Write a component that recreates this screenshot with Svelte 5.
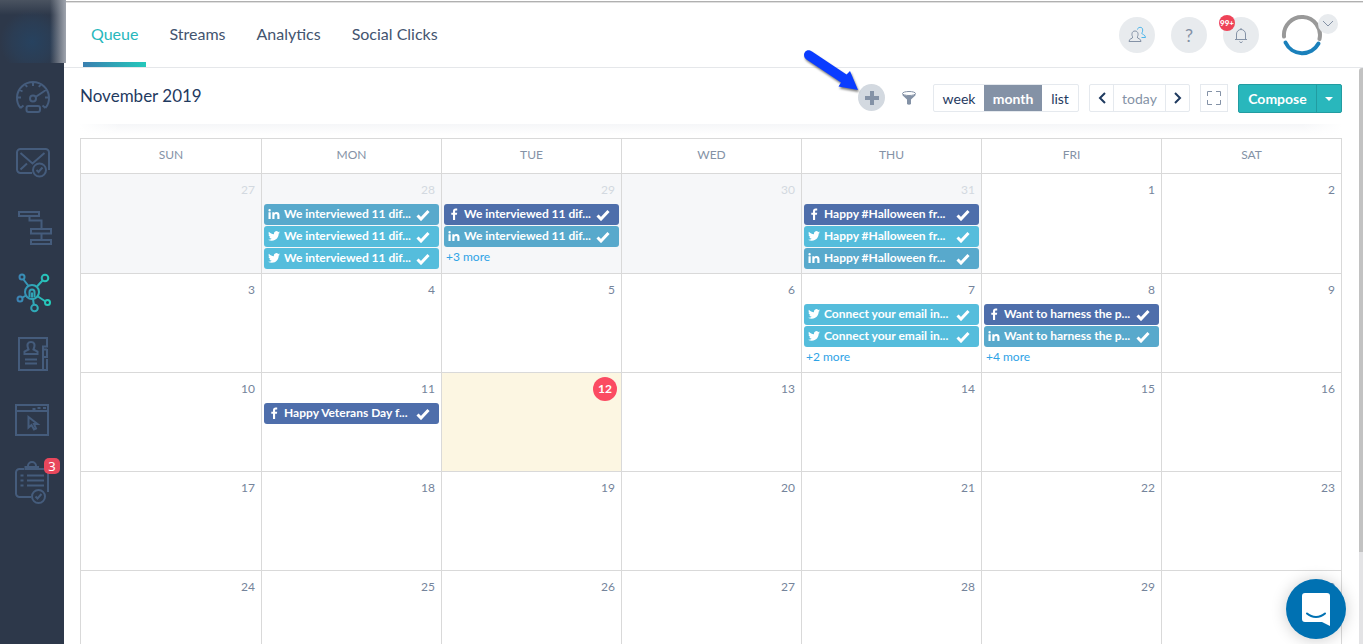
<script>
  const tabs = ['Queue', 'Streams', 'Analytics', 'Social Clicks'];
  const weekdays = ['SUN', 'MON', 'TUE', 'WED', 'THU', 'FRI', 'SAT'];
  const views = ['week', 'month', 'list'];

  let activeTab = 'Queue';
  let activeView = 'month';

  const interview = 'We interviewed 11 dif...';
  const halloween = 'Happy #Halloween fr...';
  const connect = 'Connect your email in...';
  const harness = 'Want to harness the p...';

  // posts keyed by week row and day number
  const posts = {
    '0-28': { items: [['in', interview], ['tw', interview], ['tw', interview]] },
    '0-29': { items: [['fb', interview], ['in', interview]], more: 3 },
    '0-31': { items: [['fb', halloween], ['tw', halloween], ['in', halloween]] },
    '1-7': { items: [['tw', connect], ['tw', connect]], more: 2 },
    '1-8': { items: [['fb', harness], ['in', harness]], more: 4 },
    '2-11': { items: [['fb', 'Happy Veterans Day f...']] },
  };

  const weeks = [
    [27, 28, 29, 30, 31, 1, 2],
    [3, 4, 5, 6, 7, 8, 9],
    [10, 11, 12, 13, 14, 15, 16],
    [17, 18, 19, 20, 21, 22, 23],
    [24, 25, 26, 27, 28, 29, 30],
  ].map((days, w) => days.map((n) => ({
    n,
    other: w === 0 && n > 20,
    today: n === 12,
    ...(posts[`${w}-${n}`] || { items: [] }),
  })));
</script>

<div class="shell">
  <aside class="sidebar">
    <a class="brand" href="#home" aria-label="Home"></a>
    <nav>
      <a href="#dashboard" aria-label="Dashboard">
        <svg viewBox="0 0 64 65">
          <path d="M20.500 43A16 16 0 1 1 45.500 43M20.500 43l3-2.500M45.500 43l-3-2.500M17 32.500h4M49 32.500h-4M19 24.500l3.500 2M47 24.500l-3.500 2M25 18.500l2 3.500M41 18.500l-2 3.500M33 17v4M35.500 32l9-6" />
          <circle cx="33" cy="33.500" r="3" />
          <rect x="26.500" y="41" width="13.500" height="6" rx="2" />
        </svg>
      </a>
      <a href="#email" aria-label="Email">
        <svg viewBox="0 0 64 65">
          <path d="M32 43H20.500a3.500 3.500 0 0 1-3.500-3.500V22.500a3.500 3.500 0 0 1 3.500-3.500h25a3.500 3.500 0 0 1 3.500 3.500V40M20.500 23l12 10.500 12-10.500M20.500 39.500l6.500-6" />
          <circle cx="39.500" cy="40" r="6.500" />
          <path d="M36.500 40l2 2 4-4.500" />
        </svg>
      </a>
      <a href="#automation" aria-label="Automation">
        <svg viewBox="0 0 64 65">
          <path d="M19 17h20v4H19zM31 34h20v4.500H31zM31 45h20v4H31zM29.500 22v3.500h12V33M41.500 39v5" />
        </svg>
      </a>
      <a class="active" href="#social" aria-label="Social">
        <svg viewBox="0 0 64 65">
          <defs>
            <linearGradient id="socialLine" gradientUnits="userSpaceOnUse" x1="17" y1="30" x2="51" y2="30">
              <stop offset="0" stop-color="#3d80b4" />
              <stop offset="1" stop-color="#23d0bb" />
            </linearGradient>
          </defs>
          <g stroke="url(#socialLine)">
            <circle cx="32" cy="32" r="7" />
            <circle cx="22" cy="17" r="2.500" />
            <circle cx="45" cy="18" r="3.300" />
            <circle cx="20" cy="39" r="2.500" />
            <circle cx="34.500" cy="48" r="3.300" />
            <circle cx="47.500" cy="42.500" r="2.500" />
            <path d="M23.500 19.500l5 6.500M42.500 20.500l-5.500 6M22.500 37.500l3.500-2M33 39l.800 5.500M38 36.500l7.500 5M29.500 37v-5a2.500 2.500 0 0 1 5 0v5M32 32.500v5" />
          </g>
        </svg>
      </a>
      <a href="#contacts" aria-label="Contacts">
        <svg viewBox="0 0 64 65">
          <path d="M19 13h28v8.500h-4V45H19zM47 24v8h-3M47 34v11h-3M44 24.500h3" />
          <path d="M28.500 24.500c-2.500-6 0-7.500 2.500-7.500s5 1.500 2.500 7.500l4 2v2.500H24.500v-2.500zM25 34.500h12M25 38.500h12" />
        </svg>
      </a>
      <a href="#pages" aria-label="Landing pages">
        <svg viewBox="0 0 64 65">
          <path d="M16 15h32v30H16zM16 21h32M32.500 19h3M37.500 18h3M43 18h3" />
          <path d="M28.500 27v10.500l3-2.500 2.500 4.500 2-1-2-4.500h3.500z" />
        </svg>
      </a>
      <a href="#tasks" aria-label="Tasks">
        <svg viewBox="0 0 64 65">
          <path d="M24 14h-4.500a3.500 3.500 0 0 0-3.500 3.500v21a3.500 3.500 0 0 0 3.500 3.500H31M39 14h5.500a3.500 3.500 0 0 1 3.500 3.500V37M28 11a4 4 0 1 1 8 0M20.500 20.500h3M27 20.500h17M20.500 25.500h3M27 25.500h17M20.500 30.500h3M27 30.500h17" />
          <path stroke-width="4" d="M24.500 13h14.500" />
          <circle cx="38.500" cy="41.500" r="6.500" />
          <path d="M35.500 41.500l2 2 4-4.500" />
        </svg>
        <span class="count">3</span>
      </a>
    </nav>
  </aside>

  <div class="main">
    <header class="topbar">
      <nav class="tabs">
        {#each tabs as tab}
          <a href="#{tab}" class:active={tab === activeTab} on:click={() => (activeTab = tab)}>{tab}</a>
        {/each}
      </nav>
      <div class="account">
        <button class="round" aria-label="Team">
          <svg width="18" height="18" viewBox="0 0 18 18">
            <path class="blue" d="M9.500 3.500C9.500.800 15 .300 14.700 4c0 1.800-.600 2.600-1 3.200 0 1.300 3.800 1.300 3.800 4.300h-4" />
            <path d="M1 15.500c0-3.300 3.800-2.500 3.800-4.500C3.500 9.500 3.300 5 7 5s3.500 4.500 2.200 6c0 2 3.800 1.200 3.800 4.500z" />
          </svg>
        </button>
        <button class="round help">?</button>
        <button class="round" aria-label="Notifications">
          <svg width="18" height="18" viewBox="0 0 18 18">
            <path d="M3 13.500h12M4.500 13.500V8a4.500 4.500 0 0 1 9 0v5.500M9 3.500V2M7.500 15.500a1.600 1.600 0 0 0 3 0" />
          </svg>
          <span class="unread">99+</span>
        </button>
        <button class="avatar" aria-label="Account menu">
          <svg width="42" height="42" viewBox="0 0 42 42">
            <path stroke="#999" d="M3 22.500A18 18 0 1 1 38.500 25" />
            <path stroke="#1a80bb" d="M4.500 28.500A18.500 18.500 0 0 0 37.500 29.500" />
          </svg>
          <span class="caret">
            <svg width="12" height="8" viewBox="0 0 12 8"><path d="M1 1l5 5 5-5" /></svg>
          </span>
        </button>
      </div>
    </header>

    <div class="body">
      <main>
        <div class="toolbar">
          <h1>November 2019</h1>
          <div class="actions">
            <button class="add" aria-label="Add">
              <svg width="14" height="14" viewBox="0 0 14 14"><path d="M7 0v14M0 7h14" /></svg>
              <svg class="pointer" width="64" height="52" viewBox="0 0 64 52">
                <path d="M15 8.500C8.500 4 4 12.500 9.500 16.500L44 39.500 41.500 43.500 61 47 53 28 49.500 31.500z" />
              </svg>
            </button>
            <button class="filter" aria-label="Filter">
              <svg width="16" height="16" viewBox="0 0 16 16">
                <ellipse cx="8" cy="3.500" rx="6.500" ry="2" />
                <path d="M1 4c2 2.400 12 2.400 14 0 0 1.500-3 3.500-5 5.500V14c-1 1-3 1-4 0V9.500C4 7.500 1 5.500 1 4z" />
              </svg>
            </button>
            <div class="group views">
              {#each views as view}
                <button class:active={view === activeView} on:click={() => (activeView = view)}>{view}</button>
              {/each}
            </div>
            <div class="group pager">
              <button aria-label="Previous"><svg width="8" height="12" viewBox="0 0 8 12"><path d="M7 1L2 6l5 5" /></svg></button>
              <button class="today-btn">today</button>
              <button aria-label="Next"><svg width="8" height="12" viewBox="0 0 8 12"><path d="M1 1l5 5-5 5" /></svg></button>
            </div>
            <button class="expand" aria-label="Full screen">
              <svg width="16" height="16" viewBox="0 0 16 16">
                <path d="M1.500 6V1.500H6M10 1.500h4.500V6M14.500 10v4.500H10M6 14.500H1.500V10" />
              </svg>
            </button>
            <div class="compose">
              <button>Compose</button>
              <button class="drop" aria-label="Compose options"><span></span></button>
            </div>
          </div>
        </div>
        <div class="shade"></div>

        <table>
          <thead>
            <tr>
              {#each weekdays as day}<th>{day}</th>{/each}
            </tr>
          </thead>
          <tbody>
            {#each weeks as week}
              <tr>
                {#each week as day}
                  <td class:other={day.other} class:today={day.today}>
                    <div class="date"><span>{day.n}</span></div>
                    {#each day.items as [net, text]}
                      <a class="post {net}" href="#post">
                        <svg class="net" width="12" height="12" viewBox="0 0 12 12">
                          {#if net === 'fb'}
                            <path d="M5 12V6.700H3.300V4.700H5V3.200C5 1.400 6 .500 7.600.500h1.600v1.900H8c-.700 0-.900.300-.900 1v1.300h2.100L8.900 6.700H7.100V12z" />
                          {:else if net === 'in'}
                            <path d="M.500 4.200h2.200V11H.500zM1.600 1a1.200 1.200 0 1 1 0 2.400 1.200 1.200 0 0 1 0-2.400zM4.300 4.200h2.100v.9c.400-.7 1.200-1.100 2.200-1.100 2.200 0 2.900 1.300 2.900 3.300V11H9.300V7.700c0-1-.200-1.800-1.300-1.800s-1.500.8-1.500 1.800V11H4.300z" />
                          {:else}
                            <path d="M12 2.400c-.400.200-.900.300-1.300.400.500-.300.800-.700 1-1.300-.400.300-.900.500-1.500.600A2.400 2.400 0 0 0 6 4.300C4 4.200 2.200 3.200.900 1.700.200 2.900.600 4.200 1.600 4.900c-.400 0-.800-.100-1.100-.300 0 1.200.800 2.200 2 2.400-.400.100-.700.100-1.100 0 .300 1 1.200 1.700 2.300 1.700A4.800 4.800 0 0 1 0 9.700c1.100.700 2.400 1.100 3.800 1.100 4.500 0 7-3.800 6.900-7.200.500-.300.900-.700 1.300-1.200z" />
                          {/if}
                        </svg>
                        <span>{text}</span>
                        <svg class="tick" width="14" height="14" viewBox="0 0 14 14"><path d="M1.500 8.500L5 12l7.500-8" /></svg>
                      </a>
                    {/each}
                    {#if day.more}
                      <a class="more" href="#more">+{day.more} more</a>
                    {/if}
                  </td>
                {/each}
              </tr>
            {/each}
          </tbody>
        </table>
      </main>
      <div class="scroll"></div>
    </div>
  </div>

  <button class="chat" aria-label="Open chat">
    <svg width="28" height="33" viewBox="0 0 28 33">
      <path fill="#fff" d="M3 0h22a3 3 0 0 1 3 3v30l-8-4H3a3 3 0 0 1-3-3V3a3 3 0 0 1 3-3z" />
      <path fill="none" stroke="#0071b2" stroke-width="2" stroke-linecap="round" d="M5 20.500c5 4.500 13 4.500 18 0" />
    </svg>
  </button>
</div>

<style>
  :global(body) {
    margin: 0;
    overflow: hidden;
  }

  .shell {
    display: flex;
    height: 100vh;
    overflow: hidden;
    background: #fff;
    color: #1f3a5f;
    font-family: Lato, "Liberation Sans", sans-serif;
  }

  a {
    text-decoration: none;
  }

  button {
    display: flex;
    align-items: center;
    justify-content: center;
    margin: 0;
    padding: 0;
    border: 0;
    background: none;
    color: inherit;
    font: inherit;
    cursor: pointer;
  }

  svg {
    display: block;
    fill: none;
  }

  /* sidebar */
  .sidebar {
    flex: none;
    width: 64px;
    background: #2d384a;
  }

  .brand {
    position: relative;
    display: block;
    width: 66px;
    height: 63px;
    margin-bottom: 2px;
    background:
      linear-gradient(90deg, transparent 50px, #a0a5ae 66px),
      linear-gradient(#4a5360, transparent 15px),
      radial-gradient(circle at 32px 42px, #27425f, #2b3d54 20px, #2d384a 32px);
  }

  .sidebar nav a {
    position: relative;
    display: block;
    height: 65px;
  }

  .sidebar svg {
    width: 64px;
    height: 65px;
    stroke: #455c7c;
    stroke-width: 2;
  }

  .count {
    position: absolute;
    top: 3px;
    left: 44px;
    width: 16px;
    height: 16px;
    border-radius: 5px;
    background: #e8475c;
    color: #fff;
    font: 13px/16px "Noto Sans", sans-serif;
    text-align: center;
  }

  /* top bar */
  .main {
    flex: 1;
    min-width: 0;
    display: flex;
    flex-direction: column;
  }

  .topbar {
    display: flex;
    justify-content: space-between;
    box-sizing: border-box;
    flex: none;
    height: 68px;
    padding: 0 25px 0 19px;
    border-bottom: 1px solid #e5e7ea;
    background: linear-gradient(#fff 1px, #b0b0b0 1px, #b0b0b0 2px, #e0e0e0 2px, #e0e0e0 3px, #fff 3px);
  }

  .tabs {
    display: flex;
    gap: 15px;
  }

  .tabs a {
    padding: 0 8px;
    color: #43546f;
    font-size: 16px;
    line-height: 68px;
  }

  .tabs a.active {
    color: #27b7bc;
    background: linear-gradient(90deg, #3a7fb0, #24c8bb) bottom / 100% 5px no-repeat;
  }

  .account {
    display: flex;
    align-items: center;
    gap: 16px;
    padding-top: 2px;
  }

  .round {
    position: relative;
    width: 36px;
    height: 36px;
    border-radius: 50%;
    background: #e8ebee;
    color: #8492a6;
  }

  .round svg {
    stroke: #8492a6;
    stroke-width: 1;
  }

  .round .blue {
    stroke: #4db5ea;
  }

  .help {
    font-size: 18px;
  }

  .unread {
    position: absolute;
    top: -2px;
    left: -4px;
    width: 16px;
    height: 16px;
    border-radius: 50%;
    background: #ee4358;
    color: #fff;
    font-size: 8px;
    font-weight: 900;
    line-height: 16px;
    text-align: center;
  }

  .avatar {
    position: relative;
    margin-left: 6px;
    padding-right: 15px;
  }

  .avatar > svg {
    stroke-width: 4;
    stroke-linecap: round;
  }

  .caret {
    position: absolute;
    top: 0;
    right: 0;
    display: flex;
    align-items: center;
    justify-content: center;
    width: 20px;
    height: 20px;
    border-radius: 50%;
    background: #e8ebee;
  }

  .caret svg {
    stroke: #8492a6;
  }

  /* calendar toolbar */
  .body {
    flex: 1;
    min-height: 0;
    display: flex;
  }

  main {
    flex: 1;
    min-width: 0;
    padding: 0 17px 0 16px;
  }

  .scroll {
    flex: none;
    width: 4px;
    background: linear-gradient(#c2c2c2 84%, #e3e3e5 84%);
    border-radius: 3px 0 0 0;
  }

  .toolbar {
    display: flex;
    align-items: flex-start;
    justify-content: space-between;
    height: 56px;
  }

  h1 {
    margin: 0;
    font-size: 17px;
    font-weight: 400;
    line-height: 55px;
  }

  .actions {
    display: flex;
    align-items: flex-start;
    gap: 10px;
    padding-top: 16px;
    font-size: 14px;
  }

  .add {
    position: relative;
    width: 27px;
    height: 27px;
    margin-right: 6px;
    border-radius: 50%;
    background: #d3d9e0;
  }

  .add svg {
    stroke: #8492a6;
    stroke-width: 4;
  }

  .add .pointer {
    position: absolute;
    right: 24px;
    bottom: 16px;
    fill: #0a3cff;
    stroke: none;
    filter: drop-shadow(1px 2px 1px #0008);
  }

  .filter {
    height: 28px;
    margin-right: 6px;
  }

  .filter ellipse {
    stroke: #8492a6;
  }

  .filter path {
    fill: #8492a6;
  }

  .group {
    display: flex;
    box-sizing: border-box;
    height: 28px;
    border: 1px solid #e5e9ee;
    border-radius: 2px;
  }

  .views button {
    width: 36px;
  }

  .views button:first-child {
    width: 50px;
  }

  .views .active {
    width: 58px;
    background: #8492a6;
    color: #fff;
    font-weight: 700;
  }

  .pager button {
    width: 23px;
  }

  .pager svg {
    stroke: #1f3a5f;
    stroke-width: 2;
  }

  .pager .today-btn {
    width: 53px;
    border: solid #e5e9ee;
    border-width: 0 1px;
    color: #8492a6;
  }

  .expand {
    box-sizing: border-box;
    width: 28px;
    height: 28px;
    border: 1px solid #e5e9ee;
  }

  .expand svg {
    stroke: #8492a6;
    stroke-width: 1;
  }

  .compose {
    display: flex;
    box-sizing: border-box;
    height: 29px;
    border: 1px solid #229ca1;
    border-radius: 2px;
    background: #29b7bc;
    color: #fff;
    font-weight: 700;
  }

  .compose button {
    width: 77px;
  }

  .compose .drop {
    width: 25px;
    border-left: 1px solid #229ca1;
  }

  .drop span {
    border: 4px solid transparent;
    border-top-color: #fff;
    border-bottom: 0;
  }

  .shade {
    height: 14px;
    background: linear-gradient(90deg, #fff, transparent 40px, transparent calc(100% - 40px), #fff), linear-gradient(#f5f6f8, #fff 11px);
  }

  /* month grid */
  table {
    width: 100%;
    table-layout: fixed;
    border-collapse: collapse;
  }

  th,
  td {
    box-sizing: border-box;
    padding: 0;
    border: 1px solid #d9d9d9;
  }

  th {
    height: 35px;
    color: #8492a6;
    font-size: 12px;
    font-weight: 400;
    line-height: 32px;
    vertical-align: top;
  }

  th:first-child {
    width: 181px;
  }

  td {
    height: 99px;
    padding-bottom: 3px;
    vertical-align: top;
    font-size: 12px;
  }

  .other {
    background: #f6f7f9;
  }

  .today {
    background: #fcf6e2;
  }

  .date {
    display: flex;
    justify-content: flex-end;
    padding: 4px 6px 2px;
    color: #75849b;
    line-height: 24px;
  }

  .other .date {
    color: #d3d9e0;
  }

  .today .date {
    padding-right: 4px;
  }

  .today .date span {
    width: 24px;
    border-radius: 50%;
    background: #fb4b62;
    color: #fff;
    font-weight: 700;
    text-align: center;
  }

  .post {
    display: flex;
    align-items: center;
    box-sizing: border-box;
    height: 21px;
    margin: 0 2px 1px;
    padding: 0 9px 2px 4px;
    border-radius: 3px;
    color: #fff;
    white-space: nowrap;
  }

  .post span {
    flex: 1;
    min-width: 0;
    overflow: hidden;
    margin-left: 4px;
    font-size: 12px;
    font-weight: 700;
    line-height: 18px;
  }

  .net {
    fill: #fff;
  }

  .tick {
    stroke: #fff;
    stroke-width: 3;
  }

  .fb {
    background: #4e6eab;
  }

  .in {
    background: #58a9cc;
  }

  .tw {
    background: #55bddc;
  }

  .more {
    display: block;
    padding-left: 4px;
    color: #2ea3e6;
    line-height: 18px;
  }

  .chat {
    position: fixed;
    right: 17px;
    bottom: 5px;
    width: 60px;
    height: 60px;
    border-radius: 50%;
    background: #0071b2;
    box-shadow: 0 1px 16px #0003;
  }
</style>
